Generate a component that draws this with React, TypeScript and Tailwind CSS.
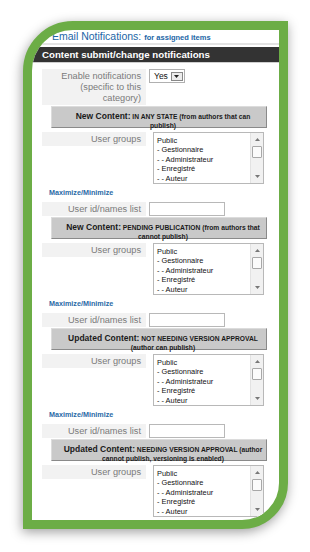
import React from "react";

const F = { fontFamily: '"Liberation Sans", Arial, sans-serif' };

function Label({ children, h }: { children: React.ReactNode; h: string }) {
  return (
    <div
      className={`w-[104px] shrink-0 bg-[#f2f2f2] text-right pr-[5px] text-[9.2px] leading-[14px] text-[#7a7a7a] ${h}`}
    >
      {children}
    </div>
  );
}

function Header({ l1a, l1b, l2 }: { l1a: string; l1b: string; l2: string }) {
  return (
    <div className="ml-[9px] w-[216px] h-[22px] bg-[#c9c9c9] border-t border-l border-[#dcdcdc] border-b border-r border-b-[#8a8a8a] border-r-[#8a8a8a] pl-[10px] pr-[2px] pt-[1.5px] text-center text-[#1a1a1a] font-bold leading-[9px]">
      <div className="whitespace-nowrap">
        <span className="text-[8.5px]">{l1a}</span>
        <span className="text-[6.7px]">{l1b}</span>
      </div>
      <div className="whitespace-nowrap text-[6.7px]">{l2}</div>
    </div>
  );
}

function ListBox() {
  const items = ["Public", "- Gestionnaire", "- - Administrateur", "- Enregistré", "- - Auteur"];
  return (
    <div className="ml-[4px] w-[111px] h-[52px] border border-[#b8b8b8] bg-white flex">
      <div className="flex-1 pl-[3px] pt-[2.5px] text-[7.4px] leading-[9.6px] text-[#111] overflow-hidden">
        {items.map((t) => (
          <div key={t} className="whitespace-nowrap">
            {t}
          </div>
        ))}
      </div>
      <div className="w-[13px] bg-[#f1f1f1] border-l border-[#e2e2e2] flex flex-col items-center">
        <div className="h-[13px] flex items-center justify-center">
          <svg width="5" height="3" viewBox="0 0 5 3">
            <path d="M0 3 L2.5 0 L5 3 Z" fill="#777" />
          </svg>
        </div>
        <div className="w-[10px] h-[12px] bg-[#fbfbfb] border border-[#a8a8a8] rounded-[1px]" />
        <div className="flex-1" />
        <div className="h-[13px] flex items-center justify-center">
          <svg width="5" height="3" viewBox="0 0 5 3">
            <path d="M0 0 L2.5 3 L5 0 Z" fill="#777" />
          </svg>
        </div>
      </div>
    </div>
  );
}

function Section({ l1a, l1b, l2, last }: { l1a: string; l1b: string; l2: string; last?: boolean }) {
  return (
    <div>
      <div className="mt-[1px]">
        <Header l1a={l1a} l1b={l1b} l2={l2} />
      </div>
      <div className="flex gap-[3px] mt-[4px]">
        <Label h="h-[14px]">User groups</Label>
        <ListBox />
      </div>
      {!last && (
        <>
          <div className="h-[18px] ml-[7px] text-[7.2px] leading-[18px] font-bold text-[#2a6aa6]">
            Maximize/Minimize
          </div>
          <div className="flex gap-[3px]">
            <Label h="h-[14px]">User id/names list</Label>
            <div className="w-[76px] h-[14px] border border-[#b8b8b8] bg-white" />
          </div>
        </>
      )}
    </div>
  );
}

export default function App() {
  return (
    <div className="w-[310px] h-[552px] bg-white pt-[21px] pl-[23px]" style={F}>
      <div className="w-[265px] h-[508px] border-[9px] border-[#6cad46] rounded-tl-[50px] rounded-br-[46px] overflow-hidden bg-white shadow-[-1px_3px_12px_rgba(0,0,0,0.38)]">
        <div className="h-[13px] pl-[20px] flex items-baseline gap-[3px] text-[#2266a6] whitespace-nowrap">
          <span className="text-[10.5px] leading-[13px]">Email Notifications:</span>
          <span className="text-[7.5px] font-bold">for assigned items</span>
        </div>
        <div className="h-[2px] bg-[#e3e3e3]" />
        <div className="h-[2px]" />
        <div className="h-[15px] bg-[#333333] pl-[10px] text-white font-bold text-[9.7px] leading-[15px] whitespace-nowrap">
          Content submit/change notifications
        </div>
        <div className="h-px bg-[#cfcfcf]" />
        <div className="pl-[10px] mt-[6px]">
          <div className="flex gap-[3px]">
            <div className="w-[104px] shrink-0 h-[36px] bg-[#f2f2f2] text-right pr-[5px] pt-[1.5px] text-[9.2px] leading-[11px] text-[#7a7a7a]">
              Enable notifications
              <br />
              (specific to this
              <br />
              category)
            </div>
            <div className="w-[36px] h-[14px] border border-[#b0b0b0] bg-white flex items-center pl-[4px] gap-[3px]">
              <span className="text-[8.5px] leading-[12px] text-[#111]">Yes</span>
              <div className="w-[12px] h-[9px] border border-[#888] bg-[#ececec] flex items-center justify-center">
                <svg width="5" height="3" viewBox="0 0 5 3">
                  <path d="M0 0 L2.5 3 L5 0 Z" fill="#222" />
                </svg>
              </div>
            </div>
          </div>
          <Section l1a="New Content:" l1b=" IN ANY STATE (from authors that can" l2="publish)" />
          <Section
            l1a="New Content:"
            l1b=" PENDING PUBLICATION (from authors that"
            l2="cannot publish)"
          />
          <Section
            l1a="Updated Content:"
            l1b=" NOT NEEDING VERSION APPROVAL"
            l2="(author can publish)"
          />
          <Section
            l1a="Updated Content:"
            l1b=" NEEDING VERSION APPROVAL (author"
            l2="cannot publish, versioning is enabled)"
            last
          />
        </div>
      </div>
    </div>
  );
}
